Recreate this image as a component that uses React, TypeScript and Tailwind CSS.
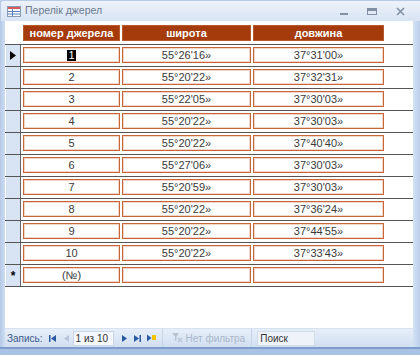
import React from "react";

const rows: [string, string, string][] = [
  ["1", "55°26'16»", "37°31'00»"],
  ["2", "55°20'22»", "37°32'31»"],
  ["3", "55°22'05»", "37°30'03»"],
  ["4", "55°20'22»", "37°30'03»"],
  ["5", "55°20'22»", "37°40'40»"],
  ["6", "55°27'06»", "37°30'03»"],
  ["7", "55°20'59»", "37°30'03»"],
  ["8", "55°20'22»", "37°36'24»"],
  ["9", "55°20'22»", "37°44'55»"],
  ["10", "55°20'22»", "37°33'43»"],
];

const boxCls =
  "h-[16px] flex items-center justify-center bg-white border border-[#c4683c] shadow-[inset_0_0_0_1px_#f3d6c8] text-[11px] leading-none text-[#3a3a3a]";

function Field({ w, children }: { w: string; children?: React.ReactNode }) {
  return <div className={`${w} ${boxCls}`}>{children}</div>;
}

function Row({ data, marker }: { data: [string, string, string] | null; marker: "cur" | "new" | null }) {
  return (
    <div className="flex border-t border-[#555]">
      <div className="w-[16px] bg-[#d8e4f4] border-l border-white border-r border-r-[#666] flex items-center justify-center">
        {marker === "cur" && (
          <svg width="6" height="9" viewBox="0 0 6 9">
            <path d="M0 0 L6 4.5 L0 9 Z" fill="#000" />
          </svg>
        )}
        {marker === "new" && <span className="text-[12px] leading-none font-bold text-black">*</span>}
      </div>
      <div className="flex gap-[2px] pl-[2px] pt-[2px] pb-[3px]">
        <Field w="w-[97px]">
          {data ? (
            data[0] === "1" ? (
              <span className="bg-black text-white px-[1px]">1</span>
            ) : (
              data[0]
            )
          ) : (
            "(№)"
          )}
        </Field>
        <Field w="w-[129px]">{data ? data[1] : ""}</Field>
        <Field w="w-[131px]">{data ? data[2] : ""}</Field>
      </div>
    </div>
  );
}

function Header({ w, children }: { w: string; children: React.ReactNode }) {
  return (
    <div
      className={`${w} h-[16px] bg-[#a53b0b] border border-[#b85a30] flex items-center justify-center text-white font-bold text-[11px] leading-none`}
    >
      {children}
    </div>
  );
}

export default function App() {
  return (
    <div
      className="w-[420px] h-[355px] flex flex-col bg-[#c3d6ef] overflow-hidden"
      style={{ fontFamily: '"Liberation Sans", Arial, sans-serif' }}
    >
      {/* Title bar */}
      <div className="h-[21px] flex items-center bg-gradient-to-b from-[#edf2fa] to-[#d8e4f4] border-t border-l border-[#b7cbe6] rounded-tl-[3px]">
        <svg width="14" height="11" viewBox="0 0 14 11" className="ml-[6px]">
          <rect x="0.5" y="0.5" width="13" height="10" fill="#fff" stroke="#8a9bb5" />
          <rect x="1" y="1" width="12" height="2" fill="#d55a5a" />
          <line x1="1" y1="5.5" x2="13" y2="5.5" stroke="#5b7fb8" />
          <line x1="1" y1="8" x2="13" y2="8" stroke="#5b7fb8" />
          <line x1="5.5" y1="3" x2="5.5" y2="10" stroke="#5b7fb8" />
        </svg>
        <span className="ml-[4px] text-[10.5px] text-[#6d7b90]">Перелік джерел</span>
        <div className="ml-auto flex items-center gap-[19px] mr-[15px] text-[#7b889c]">
          <div className="w-[8px] h-[2px] bg-[#8390a4] mt-[6px]" />
          <div className="w-[10px] h-[7px] border border-[#8390a4] border-t-[3px]" />
          <svg width="9" height="9" viewBox="0 0 9 9">
            <path d="M1 1 L8 8 M8 1 L1 8" stroke="#8390a4" strokeWidth="1.6" />
          </svg>
        </div>
      </div>

      {/* Body */}
      <div className="flex-1 flex min-h-0">
        <div className="w-[5px] bg-gradient-to-r from-[#b4c9e6] to-[#cfdef2]" />
        <div className="flex-1 flex flex-col bg-white min-w-0">
          <div className="flex-1 flex flex-col pt-[4px]">
            {/* Header */}
            <div className="flex gap-[2px] pl-[18px] pb-[3px]">
              <Header w="w-[97px]">номер джерела</Header>
              <Header w="w-[129px]">широта</Header>
              <Header w="w-[131px]">довжина</Header>
            </div>
            {rows.map((r, i) => (
              <Row key={i} data={r} marker={i === 0 ? "cur" : null} />
            ))}
            <div className="border-b border-[#555]">
              <Row data={null} marker="new" />
            </div>
          </div>

          {/* Status bar */}
          <div className="h-[19px] flex items-center bg-gradient-to-b from-[#e6eef9] to-[#d2dff1] border-t border-[#d6e2f2] text-[10px] text-[#3e5c8e]">
            <span className="ml-[2px]">Запись:</span>
            <svg width="7" height="7" viewBox="0 0 7 7" className="ml-[6px]">
              <rect x="0" y="0" width="1.5" height="7" fill="#2c5aa0" />
              <path d="M7 0 L2 3.5 L7 7 Z" fill="#2c5aa0" />
            </svg>
            <svg width="5" height="7" viewBox="0 0 5 7" className="ml-[8px]">
              <path d="M5 0 L0 3.5 L5 7 Z" fill="#b8c6da" />
            </svg>
            <div className="ml-[4px] w-[41px] h-[15px] bg-[#f4f7fc] border border-[#c9d6e8] flex items-center pl-[2px] text-[10px] text-[#333]">
              1 из 10
            </div>
            <svg width="5" height="7" viewBox="0 0 5 7" className="ml-[8px]">
              <path d="M0 0 L5 3.5 L0 7 Z" fill="#2c5aa0" />
            </svg>
            <svg width="7" height="7" viewBox="0 0 7 7" className="ml-[7px]">
              <path d="M0 0 L5 3.5 L0 7 Z" fill="#2c5aa0" />
              <rect x="5.5" y="0" width="1.5" height="7" fill="#2c5aa0" />
            </svg>
            <svg width="9" height="8" viewBox="0 0 9 8" className="ml-[6px]">
              <path d="M0 0.5 L4.5 4 L0 7.5 Z" fill="#2c5aa0" />
              <rect x="5" y="1" width="4" height="5" fill="#f5c400" />
            </svg>
            <div className="ml-[6px] w-px h-[19px] bg-[#c7d5e8]" />
            <svg width="11" height="10" viewBox="0 0 11 10" className="ml-[9px]">
              <path d="M0 0 L7 0 L4.5 3.5 L4.5 7 L3 8 L3 3.5 Z" fill="#b7c3d4" />
              <path d="M6 5 L10 9 M10 5 L6 9" stroke="#b7c3d4" strokeWidth="1.3" />
            </svg>
            <span className="ml-[3px] text-[10px] text-[#aab7ca]">Нет фильтра</span>
            <div className="ml-[6px] w-px h-[19px] bg-[#c7d5e8]" />
            <div className="ml-[5px] w-[58px] h-[15px] bg-[#eef3fa] border border-[#d0dcec] flex items-center pl-[2px] text-[10px] text-[#333]">
              Поиск
            </div>
          </div>
        </div>
        <div className="w-[7px] bg-gradient-to-r from-[#d3e1f3] to-[#bcd0eb]" />
      </div>
      <div className="h-[8px] bg-[#a9c1e4] border-t-[2px] border-[#7f9dcc]" />
    </div>
  );
}
